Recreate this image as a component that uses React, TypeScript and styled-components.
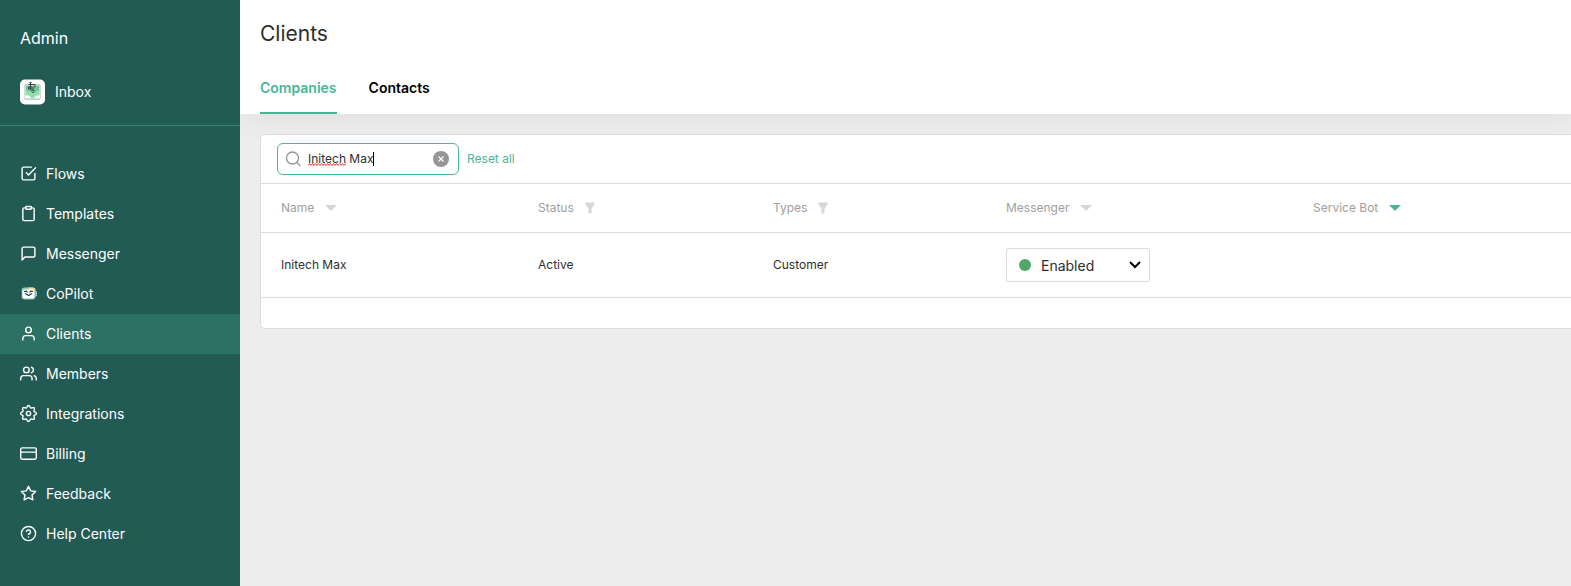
import React, { useState } from "react";
import styled, { createGlobalStyle } from "styled-components";
import {
  FiCheckSquare,
  FiClipboard,
  FiMessageSquare,
  FiUser,
  FiUsers,
  FiCreditCard,
  FiStar,
  FiHelpCircle,
} from "react-icons/fi";

const GlobalStyle = createGlobalStyle`
  *, *::before, *::after { box-sizing: border-box; }
  body {
    margin: 0;
    background: #ededed;
    color: #2e2e2e;
    font-family: Inter, "Liberation Sans", sans-serif;
    font-size: 14px;
  }
  button, input, select { font: inherit; color: inherit; }
`;

const Page = styled.div`
  display: flex;
  min-height: 100vh;
`;

const Sidebar = styled.aside`
  flex: 0 0 240px;
  background: #225a54;
  color: #fff;
`;

const SidebarTop = styled.div`
  padding: 26px 20px 20px;
  border-bottom: 1px solid #358173;
`;

const AdminTitle = styled.div`
  font-size: 16px;
  line-height: 24px;
`;

const InboxLink = styled.a`
  display: flex;
  align-items: center;
  gap: 10px;
  margin-top: 29px;
  height: 26px;
  color: inherit;
  text-decoration: none;
`;

const Label = styled.span`
  padding-bottom: 2px;
`;

const Menu = styled.nav`
  display: flex;
  flex-direction: column;
  padding-top: 28px;
`;

const MenuLink = styled.a<{ $active?: boolean }>`
  display: flex;
  align-items: center;
  gap: 9px;
  height: 40px;
  padding: 0 20px 2px;
  color: #fff;
  text-decoration: none;
  background: ${(p) => (p.$active ? "#2b7264" : "transparent")};

  svg {
    flex: none;
    width: 17px;
    height: 17px;
    stroke-width: 2;
  }
`;

const Main = styled.main`
  flex: 1;
  min-width: 0;
  overflow: hidden;
`;

const Header = styled.header`
  position: relative;
  padding: 20px 20px 0;
  background: #fff;
  box-shadow: 0 0 30px rgba(0, 0, 0, 0.08);
`;

const Title = styled.h1`
  margin: 0;
  font-size: 21px;
  font-weight: 400;
  line-height: 28px;
`;

const Tabs = styled.div`
  display: flex;
  gap: 32px;
  margin-top: 14px;
`;

const Tab = styled.button<{ $active?: boolean }>`
  height: 52px;
  padding: 0;
  border: 0;
  border-bottom: 2px solid ${(p) => (p.$active ? "#4bb597" : "transparent")};
  background: none;
  color: ${(p) => (p.$active ? "#4bb597" : "#000")};
  font-weight: 600;
  cursor: pointer;
`;

const Card = styled.section`
  margin: 20px 0 0 20px;
  border: 1px solid #dcdcdc;
  border-right: 0;
  border-radius: 5px 0 0 5px;
  background: #fff;
  padding-bottom: 30px;
`;

const Toolbar = styled.div`
  display: flex;
  align-items: center;
  gap: 8px;
  height: 49px;
  padding: 0 16px;
  border-bottom: 1px solid #dcdcdc;
`;

const SearchBox = styled.div`
  position: relative;
  display: flex;
  align-items: center;
  width: 182px;
  height: 32px;
  padding: 0 9px 0 7px;
  border: 1px solid #4bb597;
  border-radius: 6px;
`;

const SearchInput = styled.input`
  flex: 1;
  min-width: 0;
  height: 30px;
  padding: 0 0 2px 7px;
  border: 0;
  outline: 0;
  background: none;
  font-size: 12px;
  caret-color: transparent;
`;

const Squiggle = styled.svg`
  position: absolute;
  left: 30px;
  top: 19px;
`;

const Caret = styled.span`
  position: absolute;
  left: 95px;
  top: 8px;
  width: 1px;
  height: 14px;
  background: #000;
`;

const ClearButton = styled.button`
  display: flex;
  align-items: center;
  justify-content: center;
  width: 16px;
  height: 16px;
  padding: 0;
  border: 0;
  border-radius: 50%;
  background: #969696;
  cursor: pointer;
`;

const ResetButton = styled.button`
  padding: 0 0 2px;
  border: 0;
  background: none;
  color: #4bb597;
  font-size: 12px;
  cursor: pointer;
`;

const Table = styled.table`
  width: 100%;
  border-collapse: separate;
  border-spacing: 0;
  table-layout: fixed;
  font-size: 12px;
`;

const Col = styled.col<{ $width?: string }>`
  width: ${(p) => p.$width ?? "auto"};
`;

const HeadCell = styled.th`
  height: 49px;
  padding: 0 20px;
  border-bottom: 1px solid #dcdcdc;
  color: #a0a0a0;
  font-weight: 400;
  text-align: left;
`;

const HeadButton = styled.button`
  display: flex;
  align-items: center;
  gap: 11px;
  padding: 0;
  border: 0;
  background: none;
  cursor: pointer;
`;

const Cell = styled.td<{ $control?: boolean }>`
  height: 65px;
  padding: ${(p) => (p.$control ? "0 20px" : "0 20px 2px")};
  border-bottom: 1px solid #dcdcdc;
`;

const SelectBox = styled.div`
  position: relative;
  width: 144px;
`;

const StatusSelect = styled.select`
  display: block;
  appearance: none;
  width: 100%;
  height: 34px;
  padding: 0 30px 0 34px;
  border: 1px solid #dcdcdc;
  border-radius: 2px;
  background: #fff;
  font-size: 14px;
`;

const StatusDot = styled.span`
  position: absolute;
  left: 13px;
  top: 11px;
  width: 12px;
  height: 12px;
  border-radius: 50%;
  background: #52a866;
  pointer-events: none;
`;

const SelectArrow = styled.svg`
  position: absolute;
  right: 9px;
  top: 13px;
  pointer-events: none;
`;

const InboxLogo = () => (
  <svg width="25" height="26" viewBox="0 0 25 26" aria-hidden="true">
    <rect y="0.5" width="25" height="25" rx="5" fill="#fff" />
    <rect x="4" y="5" width="17" height="16" rx="2" fill="#d3dbd8" />
    <rect x="5" y="5" width="15" height="4" fill="#b7d9cf" />
    <path d="M6 7h13v10h-3.500l-1.500 2h-3l-1.500-2H6z" fill="#6cc7a2" />
    <path d="M6 12h13v5h-3.500l-1.500 2h-3l-1.500-2H6z" fill="#98dbab" />
    <path d="M5 16.500h4l2 2.500h3l2-2.500h4v3H5z" fill="#fff" />
    <path d="M5 20h15" stroke="#8ad9c6" />
    <circle cx="13.500" cy="6.500" r="2" fill="#f3d98c" />
    <path
      d="M10.500 3v7.500M8.500 5.500h6.500v2.500H8.500v2h5.500M9.500 3.500h2M13 11a1.300 1.300 0 1 0 .1 0"
      fill="none"
      stroke="#1f3b34"
      strokeWidth="0.9"
    />
  </svg>
);

const CoPilotLogo = () => (
  <svg viewBox="0 0 17 17" aria-hidden="true">
    <rect x="0.500" y="6" width="2" height="5.500" rx="1" fill="#0f3630" />
    <rect x="15" y="6" width="2" height="5.500" rx="1" fill="#a9b9b4" />
    <rect x="1.500" y="2.500" width="14" height="12" rx="3" fill="#8fc9b8" />
    <path d="M8 2.500h4.500a3 3 0 0 1 3 3H9z" fill="#f0dc98" />
    <rect x="2.500" y="4.500" width="12" height="9" rx="2.500" fill="#fff" />
    <path
      d="M4 6.500l2.500-.3L7.500 7.500M13 6.500l-2.500-.3L9.500 7.500M5 8.500l3.500 2L12 8.500"
      fill="none"
      stroke="#23453e"
      strokeWidth="1.200"
    />
  </svg>
);

/* Outline of a wheel with eight rounded teeth, centred in a 24-unit box. */
const gearPoints = Array.from({ length: 96 }, (_, i) => {
  const angle = (i / 96) * Math.PI * 2;
  const radius = 9.8 + 1.4 * Math.cos(8 * angle);
  const x = 12 + radius * Math.sin(angle);
  const y = 12 - radius * Math.cos(angle);
  return `${x.toFixed(2)},${y.toFixed(2)}`;
}).join(" ");

const GearIcon = () => (
  <svg
    viewBox="0 0 24 24"
    fill="none"
    stroke="currentColor"
    strokeLinejoin="round"
    overflow="visible"
    aria-hidden="true"
  >
    <circle cx="12" cy="12" r="3" />
    <polygon points={gearPoints} />
  </svg>
);

const SearchIcon = () => (
  <svg
    width="16"
    height="16"
    viewBox="0 0 16 16"
    fill="none"
    stroke="#969696"
    strokeWidth="1.300"
    strokeLinecap="round"
    aria-hidden="true"
  >
    <circle cx="7.500" cy="7" r="6" />
    <path d="M12 11.500L15 14.500" />
  </svg>
);

const SortIcon = ({ active = false }: { active?: boolean }) => (
  <svg width="12" height="6" viewBox="0 0 12 6" aria-hidden="true">
    <path d="M0 0h12L6 6z" fill={active ? "#4bb597" : "#d6d6d6"} />
  </svg>
);

const FilterIcon = () => (
  <svg width="10" height="12" viewBox="0 0 10 12" aria-hidden="true">
    <path d="M0.500 0.500h9v2L6.500 6.500v4.500L3.500 12V6.500L0.500 2.500z" fill="#d6d6d6" />
  </svg>
);

const menuItems = [
  { label: "Flows", Icon: FiCheckSquare },
  { label: "Templates", Icon: FiClipboard },
  { label: "Messenger", Icon: FiMessageSquare },
  { label: "CoPilot", Icon: CoPilotLogo },
  { label: "Clients", Icon: FiUser },
  { label: "Members", Icon: FiUsers },
  { label: "Integrations", Icon: GearIcon },
  { label: "Billing", Icon: FiCreditCard },
  { label: "Feedback", Icon: FiStar },
  { label: "Help Center", Icon: FiHelpCircle },
];

const columns = [
  { label: "Name", width: "257px", icon: <SortIcon /> },
  { label: "Status", width: "235px", icon: <FilterIcon /> },
  { label: "Types", width: "233px", icon: <FilterIcon /> },
  { label: "Messenger", width: "307px", icon: <SortIcon /> },
  { label: "Service Bot", width: undefined, icon: <SortIcon active /> },
];

export default function App() {
  const [query, setQuery] = useState("Initech Max");

  return (
    <Page>
      <GlobalStyle />
      <Sidebar>
        <SidebarTop>
          <AdminTitle>Admin</AdminTitle>
          <InboxLink href="#inbox">
            <InboxLogo />
            <Label>Inbox</Label>
          </InboxLink>
        </SidebarTop>
        <Menu aria-label="Admin">
          {menuItems.map(({ label, Icon }) => (
            <MenuLink key={label} href="#" $active={label === "Clients"}>
              <Icon />
              {label}
            </MenuLink>
          ))}
        </Menu>
      </Sidebar>
      <Main>
        <Header>
          <Title>Clients</Title>
          <Tabs role="tablist">
            <Tab role="tab" aria-selected="true" $active>
              Companies
            </Tab>
            <Tab role="tab" aria-selected="false">
              Contacts
            </Tab>
          </Tabs>
        </Header>
        <Card>
          <Toolbar>
            <SearchBox>
              <SearchIcon />
              <SearchInput
                aria-label="Search companies"
                value={query}
                spellCheck={false}
                onChange={(e) => setQuery(e.target.value)}
              />
              {query === "Initech Max" && (
                <>
                  <Squiggle width="38" height="3" viewBox="0 0 38 3" aria-hidden="true">
                    <path
                      d={"M0 2.500" + "l1.500 -2l1.500 2".repeat(13)}
                      fill="none"
                      stroke="#e8402c"
                    />
                  </Squiggle>
                  <Caret />
                </>
              )}
              <ClearButton aria-label="Clear search" onClick={() => setQuery("")}>
                <svg width="6" height="6" viewBox="0 0 6 6" aria-hidden="true">
                  <path d="M0.500 0.500l5 5M5.500 0.500l-5 5" stroke="#fff" strokeWidth="1.200" />
                </svg>
              </ClearButton>
            </SearchBox>
            <ResetButton>Reset all</ResetButton>
          </Toolbar>
          <Table>
            <colgroup>
              {columns.map((c) => (
                <Col key={c.label} $width={c.width} />
              ))}
            </colgroup>
            <thead>
              <tr>
                {columns.map((c) => (
                  <HeadCell key={c.label} scope="col">
                    <HeadButton>
                      <Label>{c.label}</Label>
                      {c.icon}
                    </HeadButton>
                  </HeadCell>
                ))}
              </tr>
            </thead>
            <tbody>
              <tr>
                <Cell>Initech Max</Cell>
                <Cell>Active</Cell>
                <Cell>Customer</Cell>
                <Cell $control>
                  <SelectBox>
                    <StatusSelect aria-label="Messenger" defaultValue="Enabled">
                      <option>Enabled</option>
                      <option>Disabled</option>
                    </StatusSelect>
                    <StatusDot />
                    <SelectArrow width="12" height="8" viewBox="0 0 12 8" aria-hidden="true">
                      <path d="M1 1l5 5 5-5" fill="none" stroke="#000" strokeWidth="2" />
                    </SelectArrow>
                  </SelectBox>
                </Cell>
                <Cell />
              </tr>
            </tbody>
          </Table>
        </Card>
      </Main>
    </Page>
  );
}
